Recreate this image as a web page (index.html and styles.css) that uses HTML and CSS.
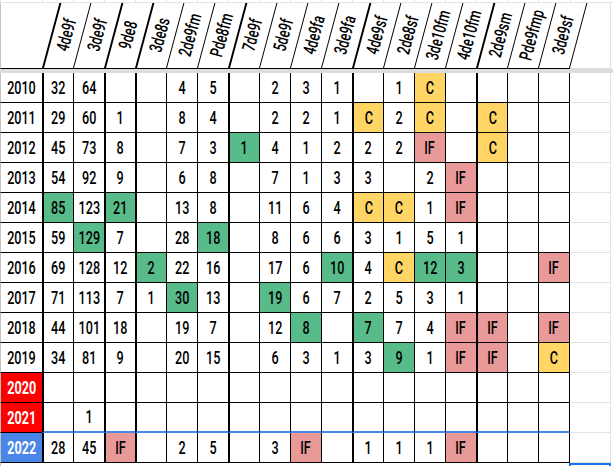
FILE: index.html
```html
<!DOCTYPE html>
<html lang="es">
<head>
<meta charset="utf-8">
<title>Tabla</title>
<link rel="stylesheet" href="styles.css">
</head>
<body>
<div class="sheet">
  <div class="strip"><div></div><div></div><div></div><div></div><div></div><div></div><div></div><div></div><div></div><div></div><div></div><div></div><div></div><div></div><div></div><div></div><div></div><div></div><div></div></div>
  <div class="hdr">
    <div class="corner"></div>
    <div class="hc tk"><span>4de9f</span></div>
    <div class="hc"><span>3de9f</span></div>
    <div class="hc tk"><span>9de8</span></div>
    <div class="hc tk"><span>3de8s</span></div>
    <div class="hc"><span>2de9fm</span></div>
    <div class="hc"><span>Pde8fm</span></div>
    <div class="hc tk"><span>7de9f</span></div>
    <div class="hc"><span>5de9f</span></div>
    <div class="hc"><span>4de9fa</span></div>
    <div class="hc"><span>3de9fa</span></div>
    <div class="hc tk"><span>4de9sf</span></div>
    <div class="hc"><span>2de8sf</span></div>
    <div class="hc"><span>3de10fm</span></div>
    <div class="hc"><span>4de10fm</span></div>
    <div class="hc tk"><span>2de9sm</span></div>
    <div class="hc"><span>Pde9fmp</span></div>
    <div class="hc end"><span>3de9sf</span></div>
    <div class="hspare"></div>
  </div>
  <div class="band"></div>

  <div class="row"><div><span>2010</span></div><div><span>32</span></div><div><span>64</span></div><div></div><div></div><div><span>4</span></div><div><span>5</span></div><div></div><div><span>2</span></div><div><span>3</span></div><div><span>1</span></div><div></div><div><span>1</span></div><div class="y"><span>C</span></div><div></div><div></div><div></div><div></div><div></div></div>

  <div class="row"><div><span>2011</span></div><div><span>29</span></div><div><span>60</span></div><div><span>1</span></div><div></div><div><span>8</span></div><div><span>4</span></div><div></div><div><span>2</span></div><div><span>2</span></div><div><span>1</span></div><div class="y"><span>C</span></div><div><span>2</span></div><div class="y"><span>C</span></div><div></div><div class="y"><span>C</span></div><div></div><div></div><div></div></div>

  <div class="row"><div><span>2012</span></div><div><span>45</span></div><div><span>73</span></div><div><span>8</span></div><div></div><div><span>7</span></div><div><span>3</span></div><div class="g"><span>1</span></div><div><span>4</span></div><div><span>1</span></div><div><span>2</span></div><div><span>2</span></div><div><span>2</span></div><div class="r"><span>IF</span></div><div></div><div class="y"><span>C</span></div><div></div><div></div><div></div></div>

  <div class="row"><div><span>2013</span></div><div><span>54</span></div><div><span>92</span></div><div><span>9</span></div><div></div><div><span>6</span></div><div><span>8</span></div><div></div><div><span>7</span></div><div><span>1</span></div><div><span>3</span></div><div><span>3</span></div><div></div><div><span>2</span></div><div class="r"><span>IF</span></div><div></div><div></div><div></div><div></div></div>

  <div class="row"><div><span>2014</span></div><div class="g"><span>85</span></div><div><span>123</span></div><div class="g"><span>21</span></div><div></div><div><span>13</span></div><div><span>8</span></div><div></div><div><span>11</span></div><div><span>6</span></div><div><span>4</span></div><div class="y"><span>C</span></div><div class="y"><span>C</span></div><div><span>1</span></div><div class="r"><span>IF</span></div><div></div><div></div><div></div><div></div></div>

  <div class="row"><div><span>2015</span></div><div><span>59</span></div><div class="g"><span>129</span></div><div><span>7</span></div><div></div><div><span>28</span></div><div class="g"><span>18</span></div><div></div><div><span>8</span></div><div><span>6</span></div><div><span>6</span></div><div><span>3</span></div><div><span>1</span></div><div><span>5</span></div><div><span>1</span></div><div></div><div></div><div></div><div></div></div>

  <div class="row"><div><span>2016</span></div><div><span>69</span></div><div><span>128</span></div><div><span>12</span></div><div class="g"><span>2</span></div><div><span>22</span></div><div><span>16</span></div><div></div><div><span>17</span></div><div><span>6</span></div><div class="g"><span>10</span></div><div><span>4</span></div><div class="y"><span>C</span></div><div class="g"><span>12</span></div><div class="g"><span>3</span></div><div></div><div></div><div class="r"><span>IF</span></div><div></div></div>

  <div class="row"><div><span>2017</span></div><div><span>71</span></div><div><span>113</span></div><div><span>7</span></div><div><span>1</span></div><div class="g"><span>30</span></div><div><span>13</span></div><div></div><div class="g"><span>19</span></div><div><span>6</span></div><div><span>7</span></div><div><span>2</span></div><div><span>5</span></div><div><span>3</span></div><div><span>1</span></div><div></div><div></div><div></div><div></div></div>

  <div class="row"><div><span>2018</span></div><div><span>44</span></div><div><span>101</span></div><div><span>18</span></div><div></div><div><span>19</span></div><div><span>7</span></div><div></div><div><span>12</span></div><div class="g"><span>8</span></div><div></div><div class="g"><span>7</span></div><div><span>7</span></div><div><span>4</span></div><div class="r"><span>IF</span></div><div class="r"><span>IF</span></div><div></div><div class="r"><span>IF</span></div><div></div></div>

  <div class="row"><div><span>2019</span></div><div><span>34</span></div><div><span>81</span></div><div><span>9</span></div><div></div><div><span>20</span></div><div><span>15</span></div><div></div><div><span>6</span></div><div><span>3</span></div><div><span>1</span></div><div><span>3</span></div><div class="g"><span>9</span></div><div><span>1</span></div><div class="r"><span>IF</span></div><div class="r"><span>IF</span></div><div></div><div class="y"><span>C</span></div><div></div></div>

  <div class="row"><div class="yred"><span>2020</span></div><div></div><div></div><div></div><div></div><div></div><div></div><div></div><div></div><div></div><div></div><div></div><div></div><div></div><div></div><div></div><div></div><div></div><div></div></div>

  <div class="row blue-under"><div class="yred"><span>2021</span></div><div></div><div><span>1</span></div><div></div><div></div><div></div><div></div><div></div><div></div><div></div><div></div><div></div><div></div><div></div><div></div><div></div><div></div><div></div><div></div></div>

  <div class="row"><div class="yblue"><span>2022</span></div><div><span>28</span></div><div><span>45</span></div><div class="r"><span>IF</span></div><div></div><div><span>2</span></div><div><span>5</span></div><div></div><div><span>3</span></div><div class="r"><span>IF</span></div><div></div><div><span>1</span></div><div><span>1</span></div><div><span>1</span></div><div class="r"><span>IF</span></div><div></div><div></div><div></div><div></div></div>

  <div class="tail"><div></div><div></div><div></div><div></div><div></div><div></div><div></div><div></div><div></div><div></div><div></div><div></div><div></div><div></div><div></div><div></div><div></div><div></div><div class="sel"></div></div>
</div>
</body>
</html>
```

FILE: styles.css
```css
* {
  box-sizing: border-box;
}

html, body {
  margin: 0;
  padding: 0;
  background: #ffffff;
  overflow: hidden;
}

body {
  width: 613px;
  height: 466px;
  font-family: Roboto, "Liberation Sans", sans-serif;
  color: #000000;
}

.sheet {
  width: 613px;
}

.strip,
.hdr,
.row,
.tail {
  display: grid;
  grid-template-columns: 42px repeat(16, 31px) 32px 41px;
}

/* partial gridline row visible above header */
.strip {
  height: 3px;
  border-bottom: 1px solid #e2e3e3;
}

.strip > div {
  border-left: 1px solid #e2e3e3;
}

/* header with rotated labels */
.hdr {
  height: 66px;
}

.corner {
  border-left: 1px solid #c4c4c4;
  border-bottom: 1px solid #000000;
}

.hc {
  position: relative;
  border-bottom: 1px solid #000000;
  display: flex;
  align-items: center;
  justify-content: center;
}

.hc::before,
.hc.end::after {
  content: "";
  position: absolute;
  bottom: 0;
  left: 0;
  width: 0;
  height: 100%;
  border-left: 1px solid #000000;
  transform-origin: 0 100%;
  transform: skewX(-15deg);
}

.hc.tk::before {
  border-left-width: 2px;
}

.hc.end::after {
  left: auto;
  right: 0;
}

.hc span {
  display: inline-block;
  flex-shrink: 0;
  white-space: nowrap;
  font-size: 18px;
  font-weight: 500;
  line-height: 18px;
  transform: translate(9px, -1px) rotate(-75deg) scaleX(0.7);
}

.hspare {
  border-right: 1px solid #e2e3e3;
  border-bottom: 1px solid #dadce0;
}

.band {
  height: 4px;
  background: #dadce0;
}

/* data rows */
.row {
  height: 30px;
}

.row > div {
  border-left: 1px solid #000000;
  border-bottom: 1px solid #000000;
  display: flex;
  align-items: center;
  justify-content: center;
  font-size: 18px;
  font-weight: 500;
  line-height: 20px;
}

.row > div:nth-child(1) {
  border-left-color: #c4c4c4;
}

.row > div:nth-child(2),
.row > div:nth-child(4),
.row > div:nth-child(5),
.row > div:nth-child(8),
.row > div:nth-child(12),
.row > div:nth-child(16) {
  border-left-width: 2px;
}

.row > div:nth-child(18) {
  border-right: 1px solid #000000;
}

.row > div:nth-child(19) {
  border-left: none;
  border-right: 1px solid #e2e3e3;
  border-bottom-color: #e2e3e3;
}

.row span {
  display: inline-block;
  flex-shrink: 0;
  white-space: nowrap;
  transform: scaleX(0.7);
}

.g {
  background: #57bb8a;
}

.y {
  background: #ffd666;
}

.r {
  background: #ea9999;
}

.row > .yred {
  background: #ff0000;
  color: #ffffff;
  font-weight: 700;
}

.row > .yblue {
  background: #4a86e8;
  color: #ffffff;
  font-weight: 700;
}

.blue-under > div:nth-child(n+2):nth-child(-n+18) {
  border-bottom: 2px solid #4a86e8;
}

/* row below the table (only its top edge is visible) */
.tail {
  height: 4px;
}

.tail > div:first-child {
  border-left: 1px solid #c4c4c4;
}

.tail > .sel {
  margin-left: -1px;
  border: 2px solid #1a73e8;
  border-bottom: none;
}
```
